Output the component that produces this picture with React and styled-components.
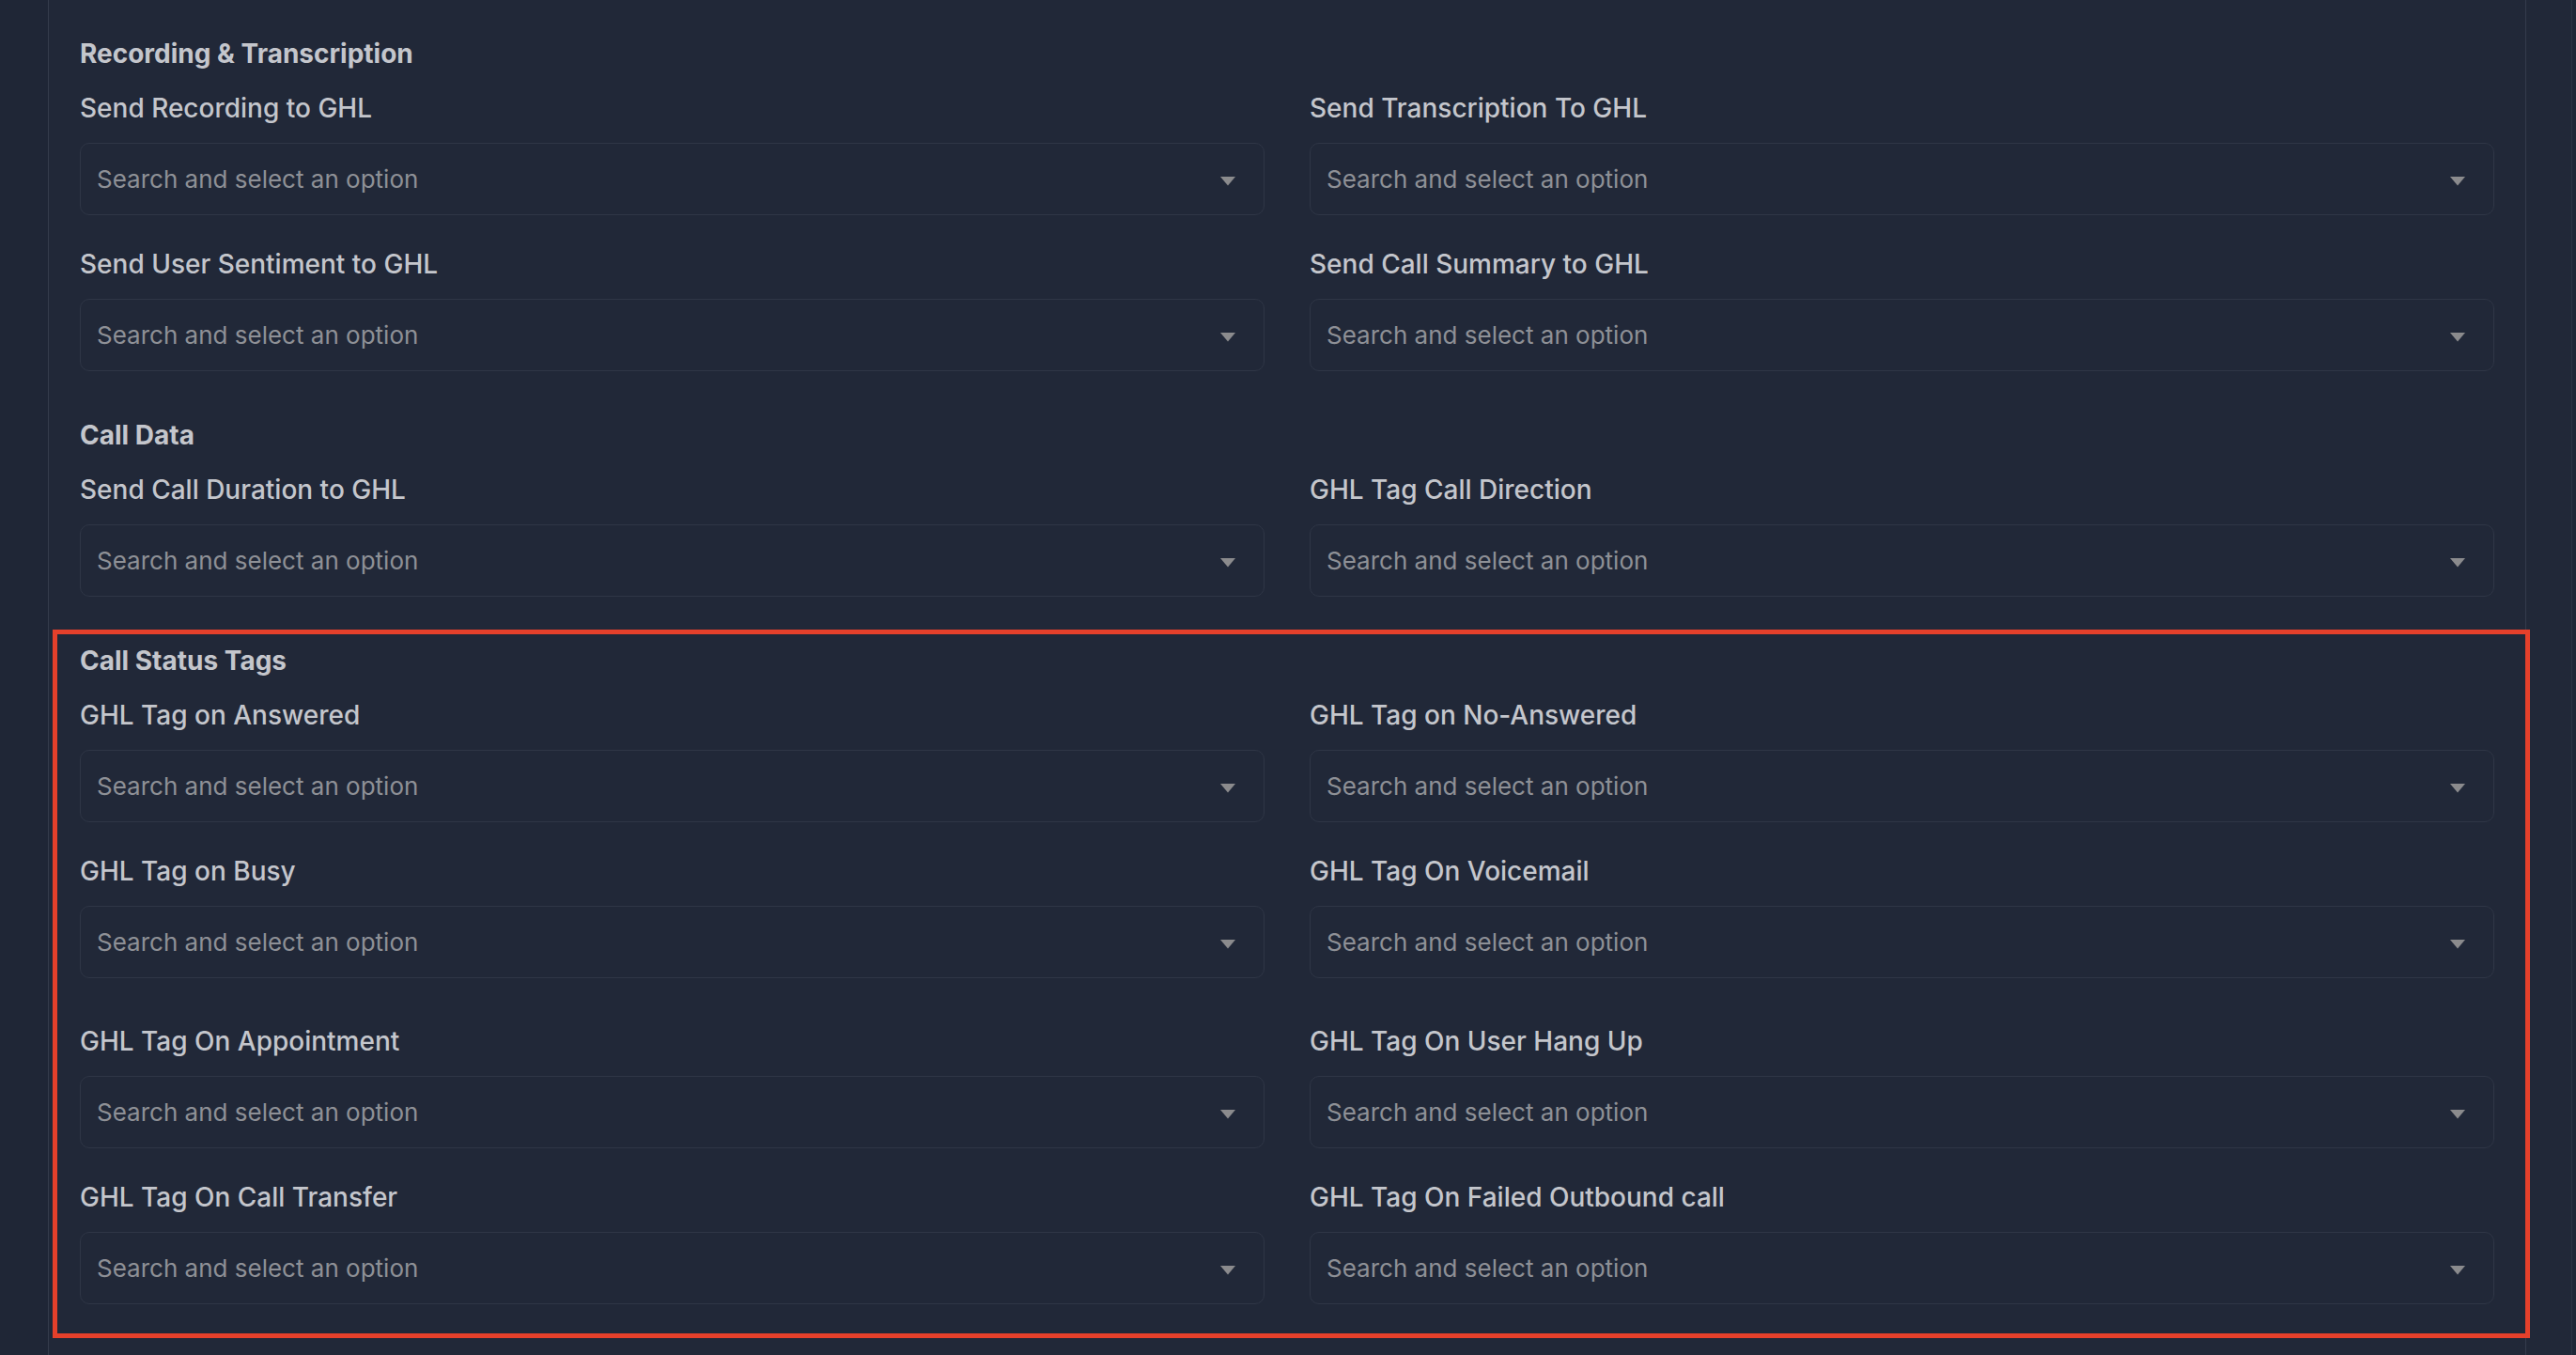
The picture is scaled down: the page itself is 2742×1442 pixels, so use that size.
import React from "react";
import styled, { createGlobalStyle } from "styled-components";

const GlobalStyle = createGlobalStyle`
  html, body {
    margin: 0;
    padding: 0;
    background: #1f2636;
    font-family: Inter, "Noto Sans", sans-serif;
    overflow: hidden;
  }
  * { box-sizing: border-box; }
`;

const Page = styled.div`
  display: flex;
  min-height: 100vh;
  padding-left: 51px;
  padding-right: 4px;
  background: #1f2636;
`;

const Panel = styled.div`
  flex: 1;
  min-width: 0;
  background: #212838;
  border-left: 1px solid #343b4c;
  border-right: 1px solid #343b4c;
  padding: 36px 33px 0;
`;

const Gutter = styled.div`
  width: 49px;
  background: #212838;
  border-right: 1px solid #2c3343;
`;

const Section = styled.section`
  position: relative;
  display: flex;
  flex-direction: column;
  margin-bottom: 47px;

  ${({ $highlighted }) =>
    $highlighted &&
    `
    &::after {
      content: "";
      position: absolute;
      top: -12px;
      left: -29px;
      right: -38px;
      bottom: -36px;
      border: 5px solid #e5402b;
      pointer-events: none;
    }
  `}
`;

const SectionTitle = styled.h3`
  margin: 0 0 16px;
  font-size: 28px;
  line-height: 42px;
  font-weight: 700;
  color: #c4c6cc;
`;

const Rows = styled.div`
  display: flex;
  flex-direction: column;
  gap: 31px;
`;

const Row = styled.div`
  display: grid;
  grid-template-columns: 1fr 1fr;
  column-gap: 48px;
  margin-top: ${({ $spaced }) => ($spaced ? "15px" : "0")};
`;

const Field = styled.div`
  display: flex;
  flex-direction: column;
`;

const Label = styled.label`
  margin-bottom: 16px;
  font-size: 28px;
  line-height: 42px;
  font-weight: 500;
  color: #c4c6cc;
`;

const Select = styled.div`
  display: flex;
  align-items: center;
  justify-content: space-between;
  height: 77px;
  padding: 0 30px 0 17px;
  background: #212838;
  border: 1px solid #2f3646;
  border-radius: 10px;
`;

const Placeholder = styled.span`
  font-size: 26px;
  color: #8e9096;
`;

const Caret = styled.svg`
  width: 16px;
  height: 10px;
  margin-top: 4px;
  flex-shrink: 0;
`;

const sections = [
  {
    title: "Recording & Transcription",
    rows: [
      { fields: ["Send Recording to GHL", "Send Transcription To GHL"] },
      { fields: ["Send User Sentiment to GHL", "Send Call Summary to GHL"] },
    ],
  },
  {
    title: "Call Data",
    rows: [{ fields: ["Send Call Duration to GHL", "GHL Tag Call Direction"] }],
  },
  {
    title: "Call Status Tags",
    highlighted: true,
    rows: [
      { fields: ["GHL Tag on Answered", "GHL Tag on No-Answered"] },
      { fields: ["GHL Tag on Busy", "GHL Tag On Voicemail"] },
      { fields: ["GHL Tag On Appointment", "GHL Tag On User Hang Up"], spaced: true },
      { fields: ["GHL Tag On Call Transfer", "GHL Tag On Failed Outbound call"] },
    ],
  },
];

const SelectField = ({ label }) => (
  <Field>
    <Label>{label}</Label>
    <Select>
      <Placeholder>Search and select an option</Placeholder>
      <Caret viewBox="0 0 16 10">
        <polygon points="0,0 16,0 8,9.5" fill="#8b8b8d" />
      </Caret>
    </Select>
  </Field>
);

const App = () => (
  <>
    <GlobalStyle />
    <Page>
      <Panel>
        {sections.map((section) => (
          <Section key={section.title} $highlighted={section.highlighted}>
            <SectionTitle>{section.title}</SectionTitle>
            <Rows>
              {section.rows.map((row) => (
                <Row key={row.fields[0]} $spaced={row.spaced}>
                  {row.fields.map((f) => (
                    <SelectField key={f} label={f} />
                  ))}
                </Row>
              ))}
            </Rows>
          </Section>
        ))}
      </Panel>
      <Gutter />
    </Page>
  </>
);

export default App;
